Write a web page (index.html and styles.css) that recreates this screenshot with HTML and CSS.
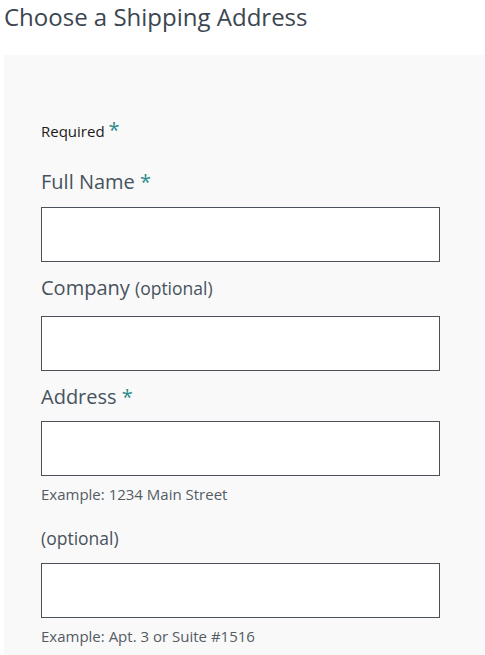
FILE: index.html
```html
<!DOCTYPE html>
<html lang="en">
<head>
<meta charset="utf-8">
<title>Choose a Shipping Address</title>
<link rel="stylesheet" href="styles.css">
</head>
<body>
<div class="page">
  <h1 class="title">Choose a Shipping Address</h1>
  <form class="panel">
    <p class="required">Required <span class="star">*</span></p>
    <label class="label label-first" for="name">Full Name <span class="star">*</span></label>
    <input class="field" id="name" type="text">
    <label class="label label-company" for="company">Company <span class="opt">(optional)</span></label>
    <input class="field" id="company" type="text">
    <label class="label label-address" for="addr1">Address <span class="star">*</span></label>
    <input class="field" id="addr1" type="text">
    <p class="hint">Example: 1234 Main Street</p>
    <label class="label label-after-hint" for="addr2"><span class="opt">(optional)</span></label>
    <input class="field" id="addr2" type="text">
    <p class="hint">Example: Apt. 3 or Suite #1516</p>
  </form>
</div>
</body>
</html>
```
FILE: styles.css
```css
html, body {
  margin: 0;
  padding: 0;
  background: #ffffff;
}
body {
  font-family: "Open Sans", "Liberation Sans", sans-serif;
  overflow: hidden;
}
.page {
  padding-left: 4px;
}
.title {
  margin: 0;
  padding-top: 2px;
  font-size: 24px;
  line-height: 30px;
  font-weight: 400;
  color: #3b4650;
}
.panel {
  margin-top: 23px;
  background: #f9f9f9;
  padding: 65px 45px 20px 37px;
  display: flex;
  flex-direction: column;
  align-items: flex-start;
}
.required {
  margin: 0;
  font-size: 15px;
  line-height: 20px;
  color: #1a1a1a;
}
.star {
  color: #2b8a8c;
}
.required .star {
  font-size: 20px;
  line-height: 20px;
}
.label {
  display: block;
  margin: 11px 0 14px;
  font-size: 20px;
  line-height: 28px;
  color: #47535d;
}
.label-first {
  margin-top: 27px;
  margin-bottom: 11px;
}
.label-company {
  margin-top: 12px;
}
.label-address {
  margin-top: 12px;
  margin-bottom: 10px;
}
.label-after-hint {
  margin-top: 20px;
  margin-bottom: 11px;
}
.opt {
  font-size: 17.5px;
}
.field {
  box-sizing: border-box;
  width: 399px;
  height: 55px;
  margin: 0;
  border: 1px solid #4a5158;
  background: #ffffff;
  border-radius: 0;
  padding: 0 10px;
  font: inherit;
}
.hint {
  margin: 8px 0 0;
  font-size: 15px;
  line-height: 20px;
  color: #535c64;
}
```
